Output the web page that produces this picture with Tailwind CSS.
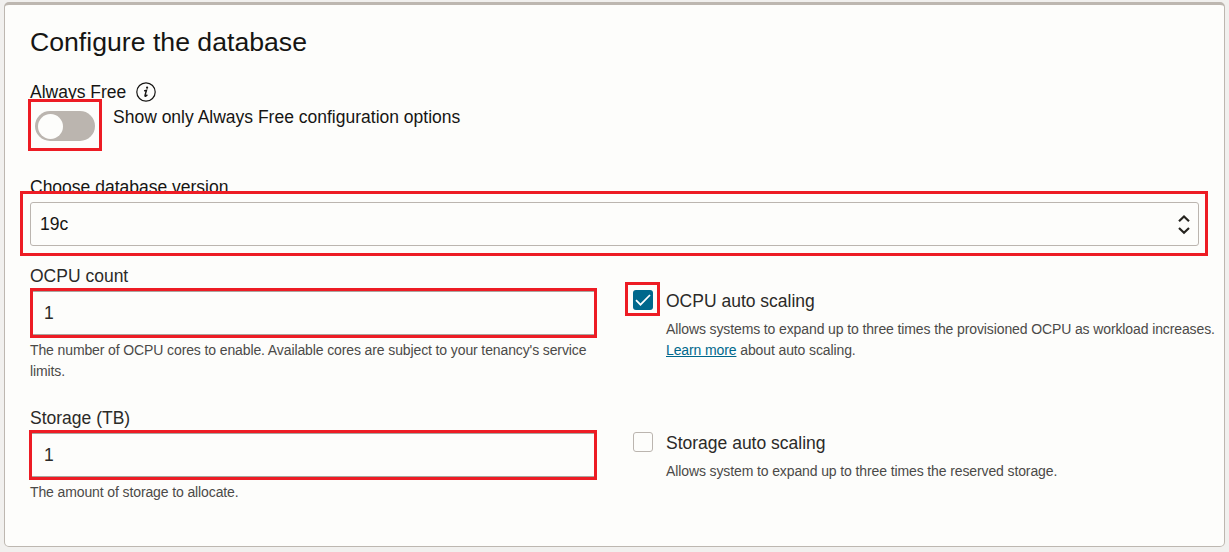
<!DOCTYPE html>
<html lang="en">
<head>
<meta charset="utf-8">
<title>Configure the database</title>
<script src="https://cdn.jsdelivr.net/npm/@tailwindcss/browser@4"></script>
</head>
<body class="h-[552px] overflow-hidden bg-[#f1f0ee] pt-0.5 pl-1 font-['Liberation_Sans',Arial,sans-serif] text-[17.5px] leading-6 text-[#161513]">
<main class="relative h-[545px] w-[1221px] rounded-[5px] border border-t-[3px] border-[#bdb7b0] bg-[#fdfdfb] px-[25px] pt-[21px]">
  <h1 class="text-[26.65px] leading-8"><span class="whitespace-nowrap">Configure the database</span></h1>

  <section class="mt-[22px]">
    <div class="flex h-6 items-center">
      <span class="whitespace-nowrap">Always Free</span>
      <svg class="ml-2.5 size-5" viewBox="0 0 20 20" fill="none"><circle cx="10" cy="10" r="9.2" stroke="#161513" stroke-width="1.2"/><circle cx="11.1" cy="5.7" r="1.1" fill="#161513"/><path d="M8.1 8.9 L10.5 8.2 L9 13.4 Q8.8 14.6 9.8 14.1 L11.4 12.7" stroke="#161513" stroke-width="1.4"/></svg>
    </div>
    <div class="flex h-[71px] items-start">
      <div class="ml-[5px] mt-[7px] h-[30px] w-[60px] rounded-full bg-[#bbb5af] p-[3px]"><div class="size-[25px] rounded-full bg-[#fdfdfb]"></div></div>
      <span class="ml-[18px] mt-px whitespace-nowrap">Show only Always Free configuration options</span>
    </div>
  </section>

  <section>
    <div><span class="whitespace-nowrap">Choose database version</span></div>
    <div class="mt-[3px] flex h-11 items-center justify-between rounded-[3px] border border-[#bbb5af] pl-[9px] pr-2">
      <span>19c</span>
      <svg class="mt-0.5 h-[22px] w-3" viewBox="0 0 12 22" fill="none" stroke="#26241f" stroke-width="2.2"><path d="M1 7.2 L6 2.5 L11 7.2 M1 14 L6 18.7 L11 14"/></svg>
    </div>
  </section>

  <section class="mt-[18px] flex h-[142px] text-[#2b2a28]">
    <div class="w-[567px] shrink-0">
      <div><span>OCPU count</span></div>
      <div class="mt-[3px] flex h-11 items-center border border-[#aaa49e] pl-[13px]">1</div>
      <p class="mt-[5px] text-[14px] leading-[21px] tracking-[-0.115px] text-[#4b4a48]">The number of OCPU cores to enable. Available cores are subject to your tenancy's service limits.</p>
    </div>
    <div class="ml-9 flex shrink-0 pt-[25px]">
      <div class="mt-px flex size-5 shrink-0 items-center justify-center rounded-[3px] bg-[#00688c]"><svg class="size-5" viewBox="0 0 20 20" fill="none" stroke="#fff" stroke-width="1.7"><path d="M3 10.2 L7.5 14.7 L17 5"/></svg></div>
      <div class="ml-[13px] whitespace-nowrap">
        <div><span>OCPU auto scaling</span></div>
        <p class="mt-1.5 text-[14px] leading-[21px] tracking-[-0.115px] text-[#4b4a48]">Allows systems to expand up to three times the provisioned OCPU as workload increases.<br><a class="text-[#00688c] underline">Learn more</a> about auto scaling.</p>
      </div>
    </div>
  </section>

  <section class="flex text-[#2b2a28]">
    <div class="w-[567px] shrink-0">
      <div><span>Storage (TB)</span></div>
      <div class="mt-[3px] flex h-11 items-center border border-[#aaa49e] pl-[13px]">1</div>
      <p class="mt-[5px] text-[14px] leading-[21px] tracking-[-0.115px] text-[#4b4a48]">The amount of storage to allocate.</p>
    </div>
    <div class="ml-9 flex shrink-0 pt-[25px]">
      <div class="mt-px size-5 shrink-0 rounded-[3px] border border-[#bbb5af]"></div>
      <div class="ml-[13px] whitespace-nowrap">
        <div><span>Storage auto scaling</span></div>
        <p class="mt-1.5 text-[14px] leading-[21px] tracking-[-0.115px] text-[#4b4a48]">Allows system to expand up to three times the reserved storage.</p>
      </div>
    </div>
  </section>
</main>

<!-- highlight frames laid over the form -->
<div class="absolute left-[28px] top-[99px] h-[52px] w-[74px] border-3 border-[#ed1c24]"></div>
<div class="absolute left-[20px] top-[191px] h-[65px] w-[1188px] border-3 border-[#ed1c24]"></div>
<div class="absolute left-[30px] top-[288px] h-[50px] w-[567px] border-3 border-[#ed1c24]"></div>
<div class="absolute left-[625px] top-[282px] h-[34px] w-[35px] border-3 border-[#ed1c24]"></div>
<div class="absolute left-[29px] top-[430px] h-[50px] w-[568px] border-3 border-[#ed1c24]"></div>
</body>
</html>
